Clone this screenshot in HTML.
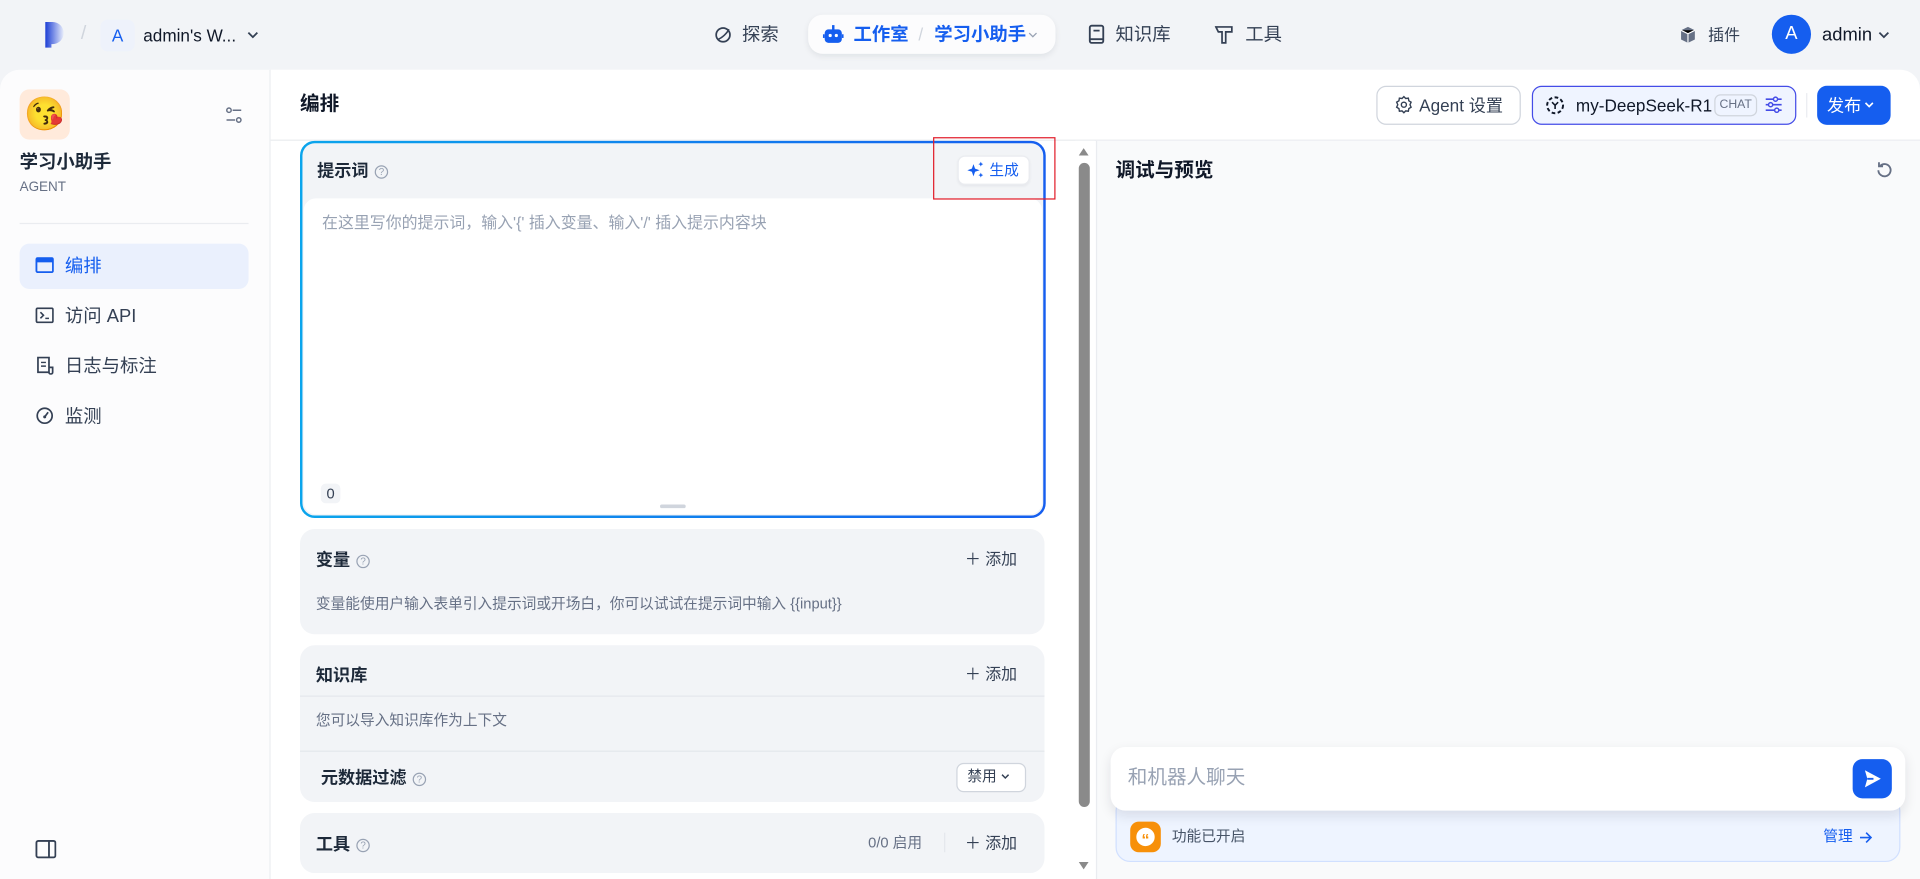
<!DOCTYPE html>
<html><head><meta charset="utf-8"><style>
*{box-sizing:border-box;margin:0;padding:0}
html,body{width:1920px;height:879px;overflow:hidden;background:#f2f4f7}
body{font-family:"Liberation Sans","Noto Sans CJK SC",sans-serif;color:#101828}
#w{position:absolute;left:0;top:0;width:1568px;height:718px;transform:scale(1.22449);transform-origin:0 0;background:#f2f4f7}
.a{position:absolute}
.t{position:absolute;white-space:nowrap;line-height:1}
svg{position:absolute}
.card{position:absolute;left:245px;width:608px;background:#f2f4f7;border-radius:12px}
.add{position:absolute;right:24px;font-size:13px;color:#344054;white-space:nowrap}
.q{display:inline-block;width:11px;height:11px;border:1px solid #98a2b3;border-radius:50%;font-size:8px;color:#98a2b3;text-align:center;line-height:9px;vertical-align:1px;margin-left:5px;font-weight:400}
</style></head><body><div id="w">
<!-- top bar -->
<svg style="left:36px;top:18px" width="16" height="21" viewBox="0 0 16 21"><defs><linearGradient id="lg" x1="0" x2="1"><stop offset="0" stop-color="#1d3fd6"/><stop offset="1" stop-color="#e8edfb"/></linearGradient></defs><path d="M1 0h6a9 9 0 0 1 0 18H6v3H1z" fill="url(#lg)"/></svg>
<div class="t" style="left:66px;top:20px;color:#d0d5dd;font-size:16px">/</div>
<div class="a" style="left:82px;top:16px;width:28px;height:26px;background:#eef2fb;border-radius:6px;color:#155eef;font-size:14px;text-align:center;line-height:26px">A</div>
<div class="t" style="left:117px;top:22px;font-size:14px;color:#101828">admin's W...</div>
<svg style="left:201px;top:23px" width="11" height="11" viewBox="0 0 12 12"><path d="M2 4l4 4 4-4" stroke="#344054" stroke-width="1.6" fill="none"/></svg>

<svg style="left:583px;top:21px" width="15" height="15" viewBox="0 0 16 16"><circle cx="8" cy="8" r="6" stroke="#344054" stroke-width="1.5" fill="none"/><path d="M3 12c4-1 9-6 10-9" stroke="#344054" stroke-width="1.4" fill="none"/></svg>
<div class="t" style="left:606px;top:21px;font-size:15px;color:#344054">探索</div>
<div class="a" style="left:660px;top:12px;width:202px;height:32px;background:#fcfcfd;border-radius:12px;box-shadow:0 2px 5px rgba(16,24,40,.08)"></div>
<svg style="left:672px;top:20px" width="17" height="17" viewBox="0 0 17 17"><rect x="1.5" y="4" width="14" height="11" rx="3" fill="#155eef"/><rect x="7.5" y="0.5" width="2" height="4" fill="#155eef"/><circle cx="6" cy="9" r="1.3" fill="#fff"/><circle cx="11" cy="9" r="1.3" fill="#fff"/><rect x="0" y="8" width="1.5" height="3" fill="#155eef"/><rect x="15.5" y="8" width="1.5" height="3" fill="#155eef"/></svg>
<div class="t" style="left:697px;top:21px;font-size:15px;font-weight:700;color:#155eef">工作室</div>
<div class="t" style="left:750px;top:21px;font-size:14px;color:#d0d5dd">/</div>
<div class="t" style="left:763px;top:21px;font-size:15px;font-weight:700;color:#155eef">学习小助手</div>
<svg style="left:839px;top:24px" width="9" height="9" viewBox="0 0 12 12"><path d="M2 4l4 4 4-4" stroke="#98a2b3" stroke-width="1.4" fill="none"/></svg>
<svg style="left:888px;top:20px" width="15" height="16" viewBox="0 0 15 16"><rect x="2" y="1" width="11" height="14" rx="1.5" stroke="#344054" stroke-width="1.5" fill="none"/><path d="M5 5h5M2 12h11" stroke="#344054" stroke-width="1.5"/></svg>
<div class="t" style="left:911px;top:21px;font-size:15px;color:#344054">知识库</div>
<svg style="left:992px;top:20px" width="15" height="16" viewBox="0 0 15 16"><path d="M1 2h13v4H9v9H6V6H3z" stroke="#344054" stroke-width="1.4" fill="none"/></svg>
<div class="t" style="left:1017px;top:21px;font-size:15px;color:#344054">工具</div>

<svg style="left:1371px;top:21px" width="15" height="15" viewBox="0 0 16 16"><path d="M8 1l6 3v8l-6 3-6-3V4z" fill="#667085"/><path d="M2 4l6 3 6-3M8 7v8" stroke="#fff" stroke-width="1"/></svg>
<div class="t" style="left:1395px;top:22px;font-size:13px;color:#344054">插件</div>
<div class="a" style="left:1447px;top:12px;width:32px;height:32px;border-radius:50%;background:#155eef;color:#fff;font-size:15px;text-align:center;line-height:32px">A</div>
<div class="t" style="left:1488px;top:21px;font-size:15px;color:#101828">admin</div>
<svg style="left:1533px;top:23px" width="11" height="11" viewBox="0 0 12 12"><path d="M2 4l4 4 4-4" stroke="#344054" stroke-width="1.6" fill="none"/></svg>

<!-- sidebar -->
<div class="a" style="left:0;top:57px;width:221px;height:661px;background:#fcfcfd;border-top-left-radius:16px;border-right:1px solid #eaecf0"></div>
<div class="a" style="left:16px;top:73px;width:41px;height:41px;background:#ffeadb;border-radius:8px;font-size:27px;text-align:center;line-height:41px;font-family:'Noto Color Emoji','DejaVu Sans',sans-serif">😘</div>
<svg style="left:184px;top:87px" width="14" height="14" viewBox="0 0 14 14"><circle cx="3" cy="3" r="1.8" stroke="#667085" stroke-width="1.2" fill="none"/><circle cx="11" cy="11" r="1.8" stroke="#667085" stroke-width="1.2" fill="none"/><path d="M6 3h7M1 11h7" stroke="#667085" stroke-width="1.2"/></svg>
<div class="t" style="left:16px;top:125px;font-size:15px;font-weight:700;color:#1d2939">学习小助手</div>
<div class="t" style="left:16px;top:148px;font-size:11px;color:#667085">AGENT</div>
<div class="a" style="left:16px;top:182px;width:187px;height:1px;background:#eaecf0"></div>
<div class="a" style="left:16px;top:199px;width:187px;height:37px;background:#eaf0fd;border-radius:8px"></div>
<svg style="left:29px;top:210px" width="15" height="13" viewBox="0 0 15 13"><rect x="0.75" y="0.75" width="13.5" height="11.5" rx="1" stroke="#155eef" stroke-width="1.5" fill="none"/><rect x="0.75" y="0.75" width="13.5" height="3.5" fill="#155eef"/></svg>
<div class="t" style="left:53px;top:210px;font-size:15px;color:#155eef">编排</div>
<svg style="left:29px;top:251px" width="15" height="13" viewBox="0 0 15 13"><rect x="0.75" y="0.75" width="13.5" height="11.5" rx="1" stroke="#344054" stroke-width="1.4" fill="none"/><path d="M4 4l2.5 2.5L4 9M8 9h3" stroke="#344054" stroke-width="1.3" fill="none"/></svg>
<div class="t" style="left:53px;top:251px;font-size:15px;color:#344054">访问 API</div>
<svg style="left:30px;top:291px" width="14" height="15" viewBox="0 0 14 15"><path d="M1 1h9v12H1zM10 9h3v4a1 1 0 0 1-3 0" stroke="#344054" stroke-width="1.4" fill="none"/><path d="M3.5 5h4M3.5 8h4" stroke="#344054" stroke-width="1.2"/></svg>
<div class="t" style="left:53px;top:292px;font-size:15px;color:#344054">日志与标注</div>
<svg style="left:29px;top:332px" width="15" height="15" viewBox="0 0 16 16"><circle cx="8" cy="8" r="6.5" stroke="#344054" stroke-width="1.5" fill="none"/><path d="M8 9l3-4" stroke="#344054" stroke-width="1.5"/><circle cx="8" cy="9" r="1.3" fill="#344054"/></svg>
<div class="t" style="left:53px;top:333px;font-size:15px;color:#344054">监测</div>
<svg style="left:29px;top:686px" width="17" height="15" viewBox="0 0 17 15"><rect x="0.75" y="0.75" width="15.5" height="13.5" rx="1.5" stroke="#344054" stroke-width="1.5" fill="none"/><path d="M11 1v13" stroke="#344054" stroke-width="1.5"/></svg>

<!-- main -->
<div class="a" style="left:221px;top:57px;width:1347px;height:661px;background:#fff;border-top-right-radius:16px"></div>
<div class="a" style="left:221px;top:114px;width:1347px;height:1px;background:#eaecf0"></div>
<div class="a" style="left:895px;top:115px;width:673px;height:603px;background:#f9fafb;border-left:1px solid #eaecf0"></div>
<div class="t" style="left:245px;top:78px;font-size:16px;font-weight:700;color:#101828">编排</div>
<div class="a" style="left:1124px;top:70px;width:118px;height:32px;border:1px solid #d0d5dd;border-radius:8px;background:#fff"></div>
<svg style="left:1139px;top:78px" width="15" height="15" viewBox="0 0 16 16"><path d="M8 1l1.6 1.6 2.3-.3.4 2.3 2 1.2-1 2.2 1 2.2-2 1.2-.4 2.3-2.3-.3L8 15l-1.6-1.6-2.3.3-.4-2.3-2-1.2 1-2.2-1-2.2 2-1.2.4-2.3 2.3.3z" stroke="#344054" stroke-width="1.2" fill="none"/><circle cx="8" cy="8" r="2.2" stroke="#344054" stroke-width="1.2" fill="none"/></svg>
<div class="t" style="left:1159px;top:79px;font-size:14px;color:#344054">Agent 设置</div>
<div class="a" style="left:1251px;top:70px;width:216px;height:32px;border:1px solid #444ce7;border-radius:8px;background:#eff4ff"></div>
<svg style="left:1262px;top:78px" width="16" height="16" viewBox="0 0 16 16"><circle cx="8" cy="8" r="6.5" stroke="#101828" stroke-width="1.6" fill="none" stroke-dasharray="3 2"/><path d="M5.5 5.5L8 8l2.5-2.5M8 8v3" stroke="#101828" stroke-width="1.3" fill="none"/></svg>
<div class="t" style="left:1287px;top:79px;font-size:14px;color:#101828">my-DeepSeek-R1</div>
<div class="a" style="left:1400px;top:77px;width:35px;height:18px;border:1px solid #d0d5dd;border-radius:5px;font-size:10px;color:#667085;text-align:center;line-height:16px">CHAT</div>
<svg style="left:1441px;top:78px" width="15" height="15" viewBox="0 0 15 15"><path d="M1 3h13M1 7.5h13M1 12h13" stroke="#444ce7" stroke-width="1.4"/><circle cx="9" cy="3" r="1.7" fill="#eff4ff" stroke="#444ce7" stroke-width="1.2"/><circle cx="5" cy="7.5" r="1.7" fill="#eff4ff" stroke="#444ce7" stroke-width="1.2"/><circle cx="10" cy="12" r="1.7" fill="#eff4ff" stroke="#444ce7" stroke-width="1.2"/></svg>
<div class="a" style="left:1475px;top:76px;width:1px;height:20px;background:#eaecf0"></div>
<div class="a" style="left:1484px;top:70px;width:60px;height:32px;border-radius:8px;background:#155eef"></div>
<div class="t" style="left:1492px;top:79px;font-size:14px;color:#fff">发布</div>
<svg style="left:1522px;top:81px" width="9" height="9" viewBox="0 0 12 12"><path d="M2 4l4 4 4-4" stroke="#fff" stroke-width="1.8" fill="none"/></svg>

<!-- prompt card -->
<div class="a" style="left:245px;top:115px;width:609px;height:308px;border-radius:12px;background:linear-gradient(90deg,#0ba5ec,#155eef);padding:2px"><div style="width:100%;height:100%;background:#f2f4f7;border-radius:10px;position:relative"><div style="position:absolute;left:1px;right:1px;top:45px;bottom:1px;background:#fff;border-radius:10px"></div></div></div>
<div class="t" style="left:259px;top:132px;font-size:14px;font-weight:700;color:#1d2939">提示词<span class="q">?</span></div>
<div class="a" style="left:782px;top:127px;width:59px;height:24px;background:#fff;border:1px solid #eaecf0;border-radius:6px;box-shadow:0 1px 2px rgba(16,24,40,.05)"></div>
<svg style="left:790px;top:132px" width="14" height="14" viewBox="0 0 14 14"><path d="M5 2l1.3 3.7L10 7 6.3 8.3 5 12 3.7 8.3 0 7l3.7-1.3z" fill="#155eef"/><path d="M11 0l.6 1.4L13 2l-1.4.6L11 4l-.6-1.4L9 2l1.4-.6zM11 9l.6 1.4 1.4.6-1.4.6L11 13l-.6-1.4L9 11l1.4-.6z" fill="#155eef"/></svg>
<div class="t" style="left:808px;top:133px;font-size:12px;color:#155eef">生成</div>
<div class="a" style="left:762px;top:112px;width:100px;height:51px;border:1.5px solid #e11d2a"></div>
<div class="t" style="left:263px;top:175px;font-size:13px;color:#98a2b3">在这里写你的提示词，输入'{' 插入变量、输入'/' 插入提示内容块</div>
<div class="a" style="left:262px;top:395px;width:16px;height:16px;background:#f2f4f7;border-radius:4px;font-size:12px;color:#344054;text-align:center;line-height:16px">0</div>
<div class="a" style="left:539px;top:412px;width:21px;height:3px;border-radius:2px;background:#d0d5dd"></div>

<!-- variables -->
<div class="card" style="top:432px;height:86px"></div>
<div class="t" style="left:258px;top:450px;font-size:14px;font-weight:700;color:#1d2939">变量<span class="q">?</span></div>
<div class="t" style="left:788px;top:450px;font-size:13px;color:#344054">＋ 添加</div>
<div class="t" style="left:258px;top:487px;font-size:12px;color:#667085">变量能使用户输入表单引入提示词或开场白，你可以试试在提示词中输入 {{input}}</div>

<!-- knowledge -->
<div class="card" style="top:527px;height:128px"></div>
<div class="a" style="left:245px;top:568px;width:608px;height:1px;background:#e4e7ec"></div>
<div class="a" style="left:245px;top:613px;width:608px;height:1px;background:#e4e7ec"></div>
<div class="t" style="left:258px;top:544px;font-size:14px;font-weight:700;color:#1d2939">知识库</div>
<div class="t" style="left:788px;top:544px;font-size:13px;color:#344054">＋ 添加</div>
<div class="t" style="left:258px;top:582px;font-size:12px;color:#667085">您可以导入知识库作为上下文</div>
<div class="t" style="left:262px;top:628px;font-size:14px;font-weight:700;color:#1d2939">元数据过滤<span class="q">?</span></div>
<div class="a" style="left:781px;top:623px;width:57px;height:24px;background:#fff;border:1px solid #d0d5dd;border-radius:6px"></div>
<div class="t" style="left:790px;top:628px;font-size:12px;color:#344054">禁用</div>
<svg style="left:817px;top:630px" width="8" height="8" viewBox="0 0 12 12"><path d="M2 4l4 4 4-4" stroke="#344054" stroke-width="1.8" fill="none"/></svg>

<!-- tools -->
<div class="card" style="top:664px;height:49px"></div>
<div class="t" style="left:258px;top:682px;font-size:14px;font-weight:700;color:#1d2939">工具<span class="q">?</span></div>
<div class="t" style="left:709px;top:682px;font-size:12px;color:#667085">0/0 启用</div>
<div class="a" style="left:771px;top:680px;width:1px;height:16px;background:#e4e7ec"></div>
<div class="t" style="left:788px;top:682px;font-size:13px;color:#344054">＋ 添加</div>

<!-- scrollbar -->
<div class="a" style="left:878px;top:115px;width:16px;height:603px;background:#fff"></div>
<svg style="left:880px;top:120px" width="10" height="8" viewBox="0 0 10 8"><path d="M1 7h8L5 1z" fill="#8a8a8a"/></svg>
<div class="a" style="left:881px;top:133px;width:9px;height:526px;background:#8a8a8a;border-radius:5px"></div>
<svg style="left:880px;top:703px" width="10" height="8" viewBox="0 0 10 8"><path d="M1 1h8L5 7z" fill="#8a8a8a"/></svg>

<!-- preview -->
<div class="t" style="left:911px;top:132px;font-size:16px;font-weight:700;color:#101828">调试与预览</div>
<svg style="left:1531px;top:131px" width="16" height="16" viewBox="0 0 16 16"><path d="M3 8a5 5 0 1 0 1.6-3.7" stroke="#667085" stroke-width="1.5" fill="none"/><path d="M3.5 1.5v3.3h3.3" stroke="#667085" stroke-width="1.5" fill="none"/></svg>
<div class="a" style="left:911px;top:650px;width:641px;height:54px;background:#eef4ff;border:1px solid #d1e0ff;border-radius:12px"></div>
<div class="a" style="left:907px;top:610px;width:649px;height:52px;background:#fff;border-radius:12px;box-shadow:0 4px 10px rgba(16,24,40,.1)"></div>
<div class="t" style="left:921px;top:628px;font-size:16px;color:#98a2b3">和机器人聊天</div>
<div class="a" style="left:1513px;top:620px;width:32px;height:32px;background:#155eef;border-radius:8px"></div>
<svg style="left:1521px;top:628px" width="16" height="16" viewBox="0 0 16 16"><path d="M2 1l13 7-13 7 2-7z" fill="#fff"/><path d="M4 8h5" stroke="#155eef" stroke-width="1.5"/></svg>
<div class="a" style="left:923px;top:671px;width:25px;height:25px;background:#f79009;border-radius:7px"></div>
<div class="a" style="left:928px;top:676px;width:15px;height:15px;background:#fff;border-radius:50%;color:#f79009;font-size:13px;font-weight:700;text-align:center;line-height:19px">“</div>
<div class="t" style="left:957px;top:677px;font-size:12px;color:#475467">功能已开启</div>
<div class="t" style="left:1489px;top:677px;font-size:12px;color:#155eef">管理</div>
<svg style="left:1518px;top:678px" width="12" height="12" viewBox="0 0 12 12"><path d="M1 6h9M6 2l4 4-4 4" stroke="#155eef" stroke-width="1.3" fill="none"/></svg>
</div></body></html>
